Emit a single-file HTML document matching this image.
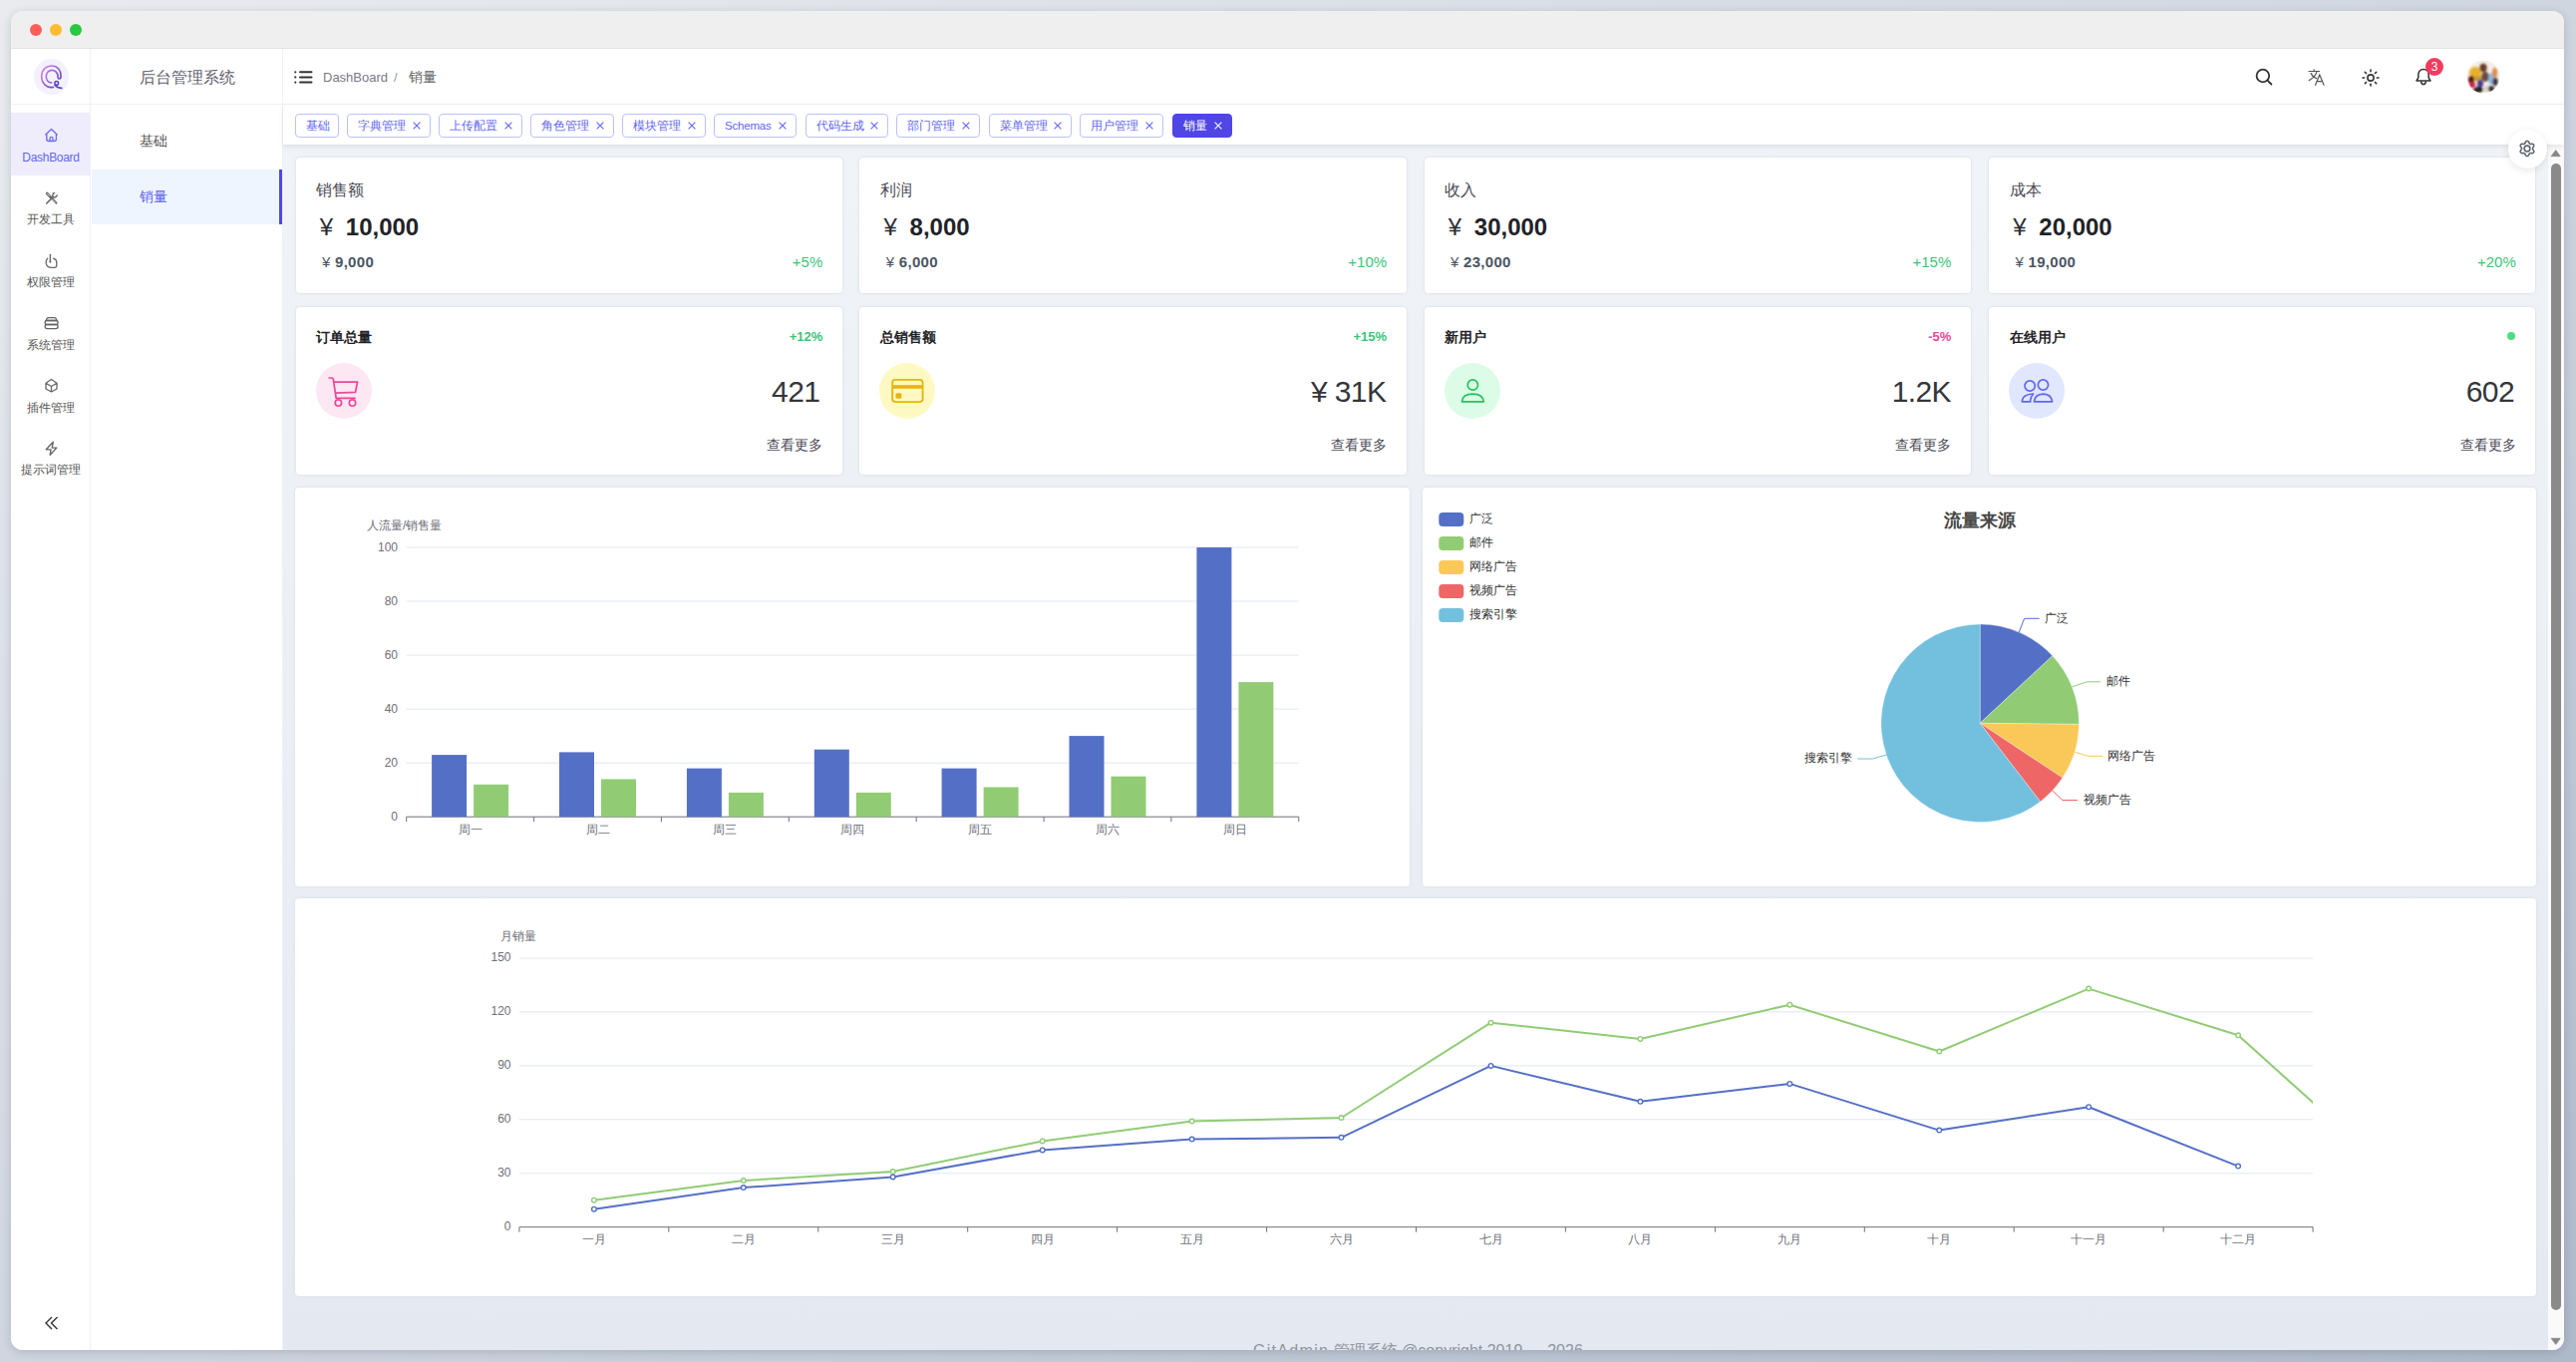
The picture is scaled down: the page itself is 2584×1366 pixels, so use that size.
<!DOCTYPE html><html><head><meta charset="utf-8"><title>Dashboard</title><style>
*{box-sizing:border-box;margin:0;padding:0}
html,body{width:2584px;height:1366px;overflow:hidden}
body{font-family:"Liberation Sans",sans-serif;position:relative;
 background:linear-gradient(to bottom right,#e9ebef 0%,#d0d6e0 50%,#aeb9ca 100%);}
.abs{position:absolute}
.win{position:absolute;left:11px;top:11px;width:2561px;height:1343px;border-radius:12px;overflow:hidden;background:#fff;
 box-shadow:0 2px 10px rgba(30,40,60,.18)}
.tb{position:absolute;left:0;top:0;width:2561px;height:38px;background:#efefef;border-bottom:1px solid #e3e3e3}
.dot{position:absolute;top:13px;width:12px;height:12px;border-radius:50%}
.t{position:absolute;white-space:nowrap;line-height:1}
.card{position:absolute;background:#fff;border-radius:4px;box-shadow:0 0 0 1px rgba(225,229,236,.75),0 0 4px rgba(0,0,0,.05)}
.tag{position:absolute;height:24px;border:1px solid #bec1f9;border-radius:4px;color:#6366f1;font-size:12px;line-height:22px;padding-left:10px;white-space:nowrap}
.tag svg{position:absolute;top:7px}
.rail-i{position:absolute;left:0;width:79px;text-align:center;font-size:12px;color:#555}
</style></head><body>
<div class="win">
<div class="tb"><div class="dot" style="left:19px;background:#ff5f57"></div><div class="dot" style="left:39px;background:#febc2e"></div><div class="dot" style="left:59px;background:#28c840"></div></div>
<div class="abs" style="left:0;top:38px;width:80px;height:1305px;background:#fff;border-right:1px solid #eef0f4"></div>
<div class="abs" style="left:81px;top:38px;width:192px;height:1305px;background:#fff;border-right:1px solid #eef0f4"></div>
<div class="abs" style="left:0;top:93px;width:272px;height:1px;background:#eef0f4"></div>
<div class="abs" style="left:22.700000000000003px;top:48.300000000000004px;width:35.8px;height:35.8px;border-radius:50%;background:#f3f1fb"></div>
<svg class="abs" style="left:16px;top:41px" width="50" height="50" viewBox="0 0 1362 1362">
<defs><linearGradient id="lg" x1="0.1" y1="0.2" x2="0.9" y2="0.9"><stop offset="0" stop-color="#cf7fe6"/><stop offset="1" stop-color="#5a3cc8"/></linearGradient></defs>
<path d="M720 965 C540 1000 400 860 400 670 C400 500 520 380 680 380 C840 380 930 510 930 660 C930 720 905 735 880 735 C855 735 845 715 845 660 C845 570 770 500 680 500 C590 500 525 580 525 675 C525 770 590 840 670 845" fill="none" stroke="url(#lg)" stroke-width="44" stroke-linecap="round"/>
<circle cx="810" cy="855" r="50" fill="none" stroke="#5b3fcc" stroke-width="40"/>
<path d="M765 915 C825 985 880 995 950 990" fill="none" stroke="#5b3fcc" stroke-width="44" stroke-linecap="round"/>
</svg>
<div class="t" style="left:129px;top:59px;font-size:16px;color:#5f5f6e">后台管理系统</div>
<div class="abs" style="left:0;top:102px;width:79px;height:63px;background:#efedfb"></div>
<svg class="abs" style="left:30px;top:114px;color:#6f6cf0" width="20" height="20" viewBox="0 0 20 20"><path d="M4.8 10 L10.5 4.4 L16.2 10 M5.8 9.4 V14.6 C5.8 15.8 6.6 16.5 7.8 16.5 H13.4 C14.6 16.5 15.4 15.8 15.4 14.6 V9.4 M9 16.5 V14 C9 13 9.6 12.4 10.5 12.4 C11.4 12.4 12 13 12 14 V16.5" fill="none" stroke="currentColor" stroke-width="1.35" stroke-linejoin="round" stroke-linecap="round"/></svg>
<div class="t" style="left:0;width:80px;text-align:center;top:141px;font-size:12px;color:#6366f1;letter-spacing:-0.3px;">DashBoard</div>
<svg class="abs" style="left:30px;top:177px;color:#666" width="20" height="20" viewBox="0 0 20 20"><g fill="none" stroke="currentColor" stroke-linecap="round" stroke-linejoin="round"><path d="M6.2 6 L9.6 9.6" stroke-width="2.6"/><path d="M9.6 9.6 L15.3 15.6" stroke-width="2.2"/><path d="M5.7 16 L12.2 9.6" stroke-width="1.6"/><path d="M12.2 9.6 C11.3 8.2 11.8 6 13.6 5.4 M12.2 9.6 C13.6 10.4 15.6 9.8 16.2 8" stroke-width="1.4"/></g><g fill="#fff"><path d="M6.6 6.3 L8.6 8.4" stroke="#fff" stroke-width="0.8" stroke-linecap="round"/><path d="M11.5 12.1 L14.6 15.3" stroke="#fff" stroke-width="0.7" stroke-linecap="round"/></g></svg>
<div class="t" style="left:0;width:80px;text-align:center;top:203px;font-size:12px;color:#555;">开发工具</div>
<svg class="abs" style="left:30px;top:240px;color:#666" width="20" height="20" viewBox="0 0 20 20"><g fill="none" stroke="currentColor" stroke-width="1.3" stroke-linecap="round"><path d="M9.4 4.3 V11.2"/><path d="M6.6 8.2 C5.4 9.4 5 11 5.2 12.8 C5.5 15.4 7.4 17.2 10 17.3 H14 C15.1 17.3 15.8 16.6 15.8 15.5 V12 C15.8 10.3 14.6 9 12.6 8.2"/></g><circle cx="9.4" cy="11.6" r="1.1" fill="currentColor"/></svg>
<div class="t" style="left:0;width:80px;text-align:center;top:266px;font-size:12px;color:#555;">权限管理</div>
<svg class="abs" style="left:30px;top:302px;color:#666" width="20" height="20" viewBox="0 0 20 20"><g fill="none" stroke="currentColor" stroke-width="1.3" stroke-linejoin="round"><path d="M7.4 5.6 H13.8 C14.8 5.6 15.6 7 16 8.5 H5.2 C5.6 7 6.4 5.6 7.4 5.6 Z"/><rect x="4.1" y="8.5" width="13" height="4" rx="2"/><rect x="4.1" y="12.5" width="13" height="4.2" rx="2.1"/></g></svg>
<div class="t" style="left:0;width:80px;text-align:center;top:329px;font-size:12px;color:#555;">系统管理</div>
<svg class="abs" style="left:30px;top:365px;color:#666" width="20" height="20" viewBox="0 0 20 20"><path d="M10.5 4.5 L16 8.2 V14 L10.5 17 L5 14 V8.2 Z M5 8.2 L10.5 11.5 L16 8.2 M10.5 11.5 V17" fill="none" stroke="currentColor" stroke-width="1.3" stroke-linejoin="round"/></svg>
<div class="t" style="left:0;width:80px;text-align:center;top:392px;font-size:12px;color:#555;">插件管理</div>
<svg class="abs" style="left:30px;top:428px;color:#666" width="20" height="20" viewBox="0 0 20 20"><path d="M12.3 4.3 L5.3 11.8 H10 L9.2 17.3 L15.8 10.1 H11.2 Z" fill="none" stroke="currentColor" stroke-width="1.35" stroke-linejoin="round"/></svg>
<div class="t" style="left:0;width:80px;text-align:center;top:454px;font-size:12px;color:#555;">提示词管理</div>
<svg class="abs" style="left:33px;top:1308px" width="16" height="16" viewBox="0 0 16 16"><path d="M8 2 L2 8 L8 14 M13.5 2 L7.5 8 L13.5 14" fill="none" stroke="#333" stroke-width="1.4"/></svg>
<div class="t" style="left:129px;top:123px;font-size:14px;color:#555">基础</div>
<div class="abs" style="left:81px;top:159px;width:191px;height:55px;background:#eff5ff"></div>
<div class="abs" style="left:269px;top:159px;width:3px;height:55px;background:#4f46e5"></div>
<div class="t" style="left:129px;top:179px;font-size:14px;color:#6366f1">销量</div>
<div class="abs" style="left:273px;top:93px;width:2288px;height:1px;background:#eef0f4"></div>
<svg class="abs" style="left:284px;top:59px" width="20" height="15" viewBox="0 0 20 15"><g fill="#333"><circle cx="1.3" cy="2.3" r="1.1"/><circle cx="1.3" cy="7.4" r="1.1"/><circle cx="1.3" cy="12.6" r="1.1"/></g><g stroke="#333" stroke-width="2" stroke-linecap="round"><path d="M6 2.3 H17.5 M6 7.4 H17.5 M6 12.6 H17.5"/></g></svg>
<div class="t" style="left:313px;top:60px;font-size:13px;color:#7a7a86">DashBoard</div>
<div class="t" style="left:384px;top:60px;font-size:13px;color:#9a9aa6">/</div>
<div class="t" style="left:399px;top:59px;font-size:14px;color:#666">销量</div>
<svg class="abs" style="left:2251px;top:57px" width="18" height="18" viewBox="0 0 18 18"><circle cx="7.9" cy="8" r="6.3" fill="none" stroke="#333" stroke-width="1.8"/><path d="M12.5 12.6 L16.4 16.5" stroke="#333" stroke-width="1.9" stroke-linecap="round"/></svg>
<svg class="abs" style="left:2304px;top:58px" width="18" height="18" viewBox="0 0 18 18"><g fill="none" stroke="#555" stroke-width="1.2" stroke-linecap="round"><path d="M1 2.5 H11.6 M6.2 0.9 V2.5 M3.2 4.6 C4.4 7.5 6.4 9 8.6 9.6 M9 2.9 C7.8 6.5 5 9.8 1.2 11.6 M7.5 16.3 L11.8 6 L16.1 16.3 M9.1 12.6 H14.5"/></g></svg>
<svg class="abs" style="left:2358.2px;top:57.599999999999994px" width="18" height="18" viewBox="0 0 18 18"><circle cx="9" cy="9" r="3.1" fill="none" stroke="#333" stroke-width="1.6"/><path d="M9.00 2.70 L9.00 1.00" stroke="#333" stroke-width="1.6" stroke-linecap="round"/><path d="M13.45 4.55 L14.66 3.34" stroke="#333" stroke-width="1.6" stroke-linecap="round"/><path d="M15.30 9.00 L17.00 9.00" stroke="#333" stroke-width="1.6" stroke-linecap="round"/><path d="M13.45 13.45 L14.66 14.66" stroke="#333" stroke-width="1.6" stroke-linecap="round"/><path d="M9.00 15.30 L9.00 17.00" stroke="#333" stroke-width="1.6" stroke-linecap="round"/><path d="M4.55 13.45 L3.34 14.66" stroke="#333" stroke-width="1.6" stroke-linecap="round"/><path d="M2.70 9.00 L1.00 9.00" stroke="#333" stroke-width="1.6" stroke-linecap="round"/><path d="M4.55 4.55 L3.34 3.34" stroke="#333" stroke-width="1.6" stroke-linecap="round"/></svg>
<svg class="abs" style="left:2411px;top:57px" width="18" height="19" viewBox="0 0 18 19"><path d="M9 1.6 C5.6 1.6 3.8 4.2 3.8 7 V10 L2 12.9 H16 L14.2 10 V7 C14.2 4.2 12.4 1.6 9 1.6 Z" fill="none" stroke="#333" stroke-width="1.5" stroke-linejoin="round"/><path d="M6.6 13.2 C6.6 15.2 7.6 16.6 9 16.6 C10.4 16.6 11.4 15.2 11.4 13.2" fill="none" stroke="#333" stroke-width="1.5"/></svg>
<div class="abs" style="left:2422px;top:47px;width:18px;height:18px;border-radius:50%;background:#f23b5f;color:#fff;font-size:12px;line-height:18px;text-align:center">3</div>
<svg class="abs" style="left:2462.6px;top:49px" width="34" height="34" viewBox="0 0 34 34">
<defs><clipPath id="avc"><circle cx="17" cy="17" r="16.6"/></clipPath><filter id="avb" x="-20%" y="-20%" width="140%" height="140%"><feGaussianBlur stdDeviation="0.9"/></filter></defs>
<g clip-path="url(#avc)"><rect width="34" height="34" fill="#f4efe6"/>
<g filter="url(#avb)">
<ellipse cx="9" cy="13" rx="6" ry="6" fill="#e8b02a"/>
<ellipse cx="12" cy="19" rx="4" ry="3" fill="#c99a3a"/>
<ellipse cx="5" cy="20" rx="3" ry="4" fill="#5a1a14"/>
<ellipse cx="6" cy="25" rx="3" ry="3" fill="#d0203a"/>
<ellipse cx="17" cy="8" rx="3.6" ry="4.2" fill="#6a3a2a"/>
<ellipse cx="19" cy="17" rx="4" ry="5" fill="#6a4a45"/>
<ellipse cx="14" cy="24" rx="3" ry="4" fill="#4a3a90"/>
<ellipse cx="25" cy="19" rx="3" ry="6" fill="#8fb8d8"/>
<ellipse cx="28.5" cy="13" rx="2.5" ry="5" fill="#e08a4a"/>
<ellipse cx="29" cy="22" rx="2.5" ry="4" fill="#3a2a40"/>
<ellipse cx="12" cy="30" rx="5" ry="3" fill="#2a2226"/>
<ellipse cx="20" cy="29" rx="3" ry="3" fill="#d8d2c8"/>
<ellipse cx="25" cy="29" rx="3" ry="3" fill="#3a3030"/>
</g></g></svg>
<div class="abs" style="left:273px;top:94px;width:2288px;height:40px;background:#fff;box-shadow:0 2px 5px rgba(0,0,0,.09);z-index:2">
<div class="tag" style="left:12px;top:8.5px;width:44px;">基础</div>
<div class="tag" style="left:64px;top:8.5px;width:84px;">字典管理<svg style="right:9px" width="8" height="8" viewBox="0 0 8 8"><path d="M0.6 0.6 L7.4 7.4 M7.4 0.6 L0.6 7.4" stroke="#6366f1" stroke-width="1.1"/></svg></div>
<div class="tag" style="left:156px;top:8.5px;width:84px;">上传配置<svg style="right:9px" width="8" height="8" viewBox="0 0 8 8"><path d="M0.6 0.6 L7.4 7.4 M7.4 0.6 L0.6 7.4" stroke="#6366f1" stroke-width="1.1"/></svg></div>
<div class="tag" style="left:248px;top:8.5px;width:84px;">角色管理<svg style="right:9px" width="8" height="8" viewBox="0 0 8 8"><path d="M0.6 0.6 L7.4 7.4 M7.4 0.6 L0.6 7.4" stroke="#6366f1" stroke-width="1.1"/></svg></div>
<div class="tag" style="left:340px;top:8.5px;width:84px;">模块管理<svg style="right:9px" width="8" height="8" viewBox="0 0 8 8"><path d="M0.6 0.6 L7.4 7.4 M7.4 0.6 L0.6 7.4" stroke="#6366f1" stroke-width="1.1"/></svg></div>
<div class="tag" style="left:432px;top:8.5px;width:83px;font-size:11.5px;letter-spacing:-0.2px;">Schemas<svg style="right:9px" width="8" height="8" viewBox="0 0 8 8"><path d="M0.6 0.6 L7.4 7.4 M7.4 0.6 L0.6 7.4" stroke="#6366f1" stroke-width="1.1"/></svg></div>
<div class="tag" style="left:524px;top:8.5px;width:83px;">代码生成<svg style="right:9px" width="8" height="8" viewBox="0 0 8 8"><path d="M0.6 0.6 L7.4 7.4 M7.4 0.6 L0.6 7.4" stroke="#6366f1" stroke-width="1.1"/></svg></div>
<div class="tag" style="left:615px;top:8.5px;width:84px;">部门管理<svg style="right:9px" width="8" height="8" viewBox="0 0 8 8"><path d="M0.6 0.6 L7.4 7.4 M7.4 0.6 L0.6 7.4" stroke="#6366f1" stroke-width="1.1"/></svg></div>
<div class="tag" style="left:708px;top:8.5px;width:83px;">菜单管理<svg style="right:9px" width="8" height="8" viewBox="0 0 8 8"><path d="M0.6 0.6 L7.4 7.4 M7.4 0.6 L0.6 7.4" stroke="#6366f1" stroke-width="1.1"/></svg></div>
<div class="tag" style="left:799px;top:8.5px;width:84px;">用户管理<svg style="right:9px" width="8" height="8" viewBox="0 0 8 8"><path d="M0.6 0.6 L7.4 7.4 M7.4 0.6 L0.6 7.4" stroke="#6366f1" stroke-width="1.1"/></svg></div>
<div class="tag" style="left:892px;top:8.5px;width:60px;background:#4f46e5;border-color:#4f46e5;color:#fff;">销量<svg style="right:9px" width="8" height="8" viewBox="0 0 8 8"><path d="M0.6 0.6 L7.4 7.4 M7.4 0.6 L0.6 7.4" stroke="#fff" stroke-width="1.1"/></svg></div>
</div>
<div class="abs" style="left:273px;top:134px;width:2272px;height:1209px;background:linear-gradient(180deg,#f0f3f7 0%,#eaeef4 60%,#e4e8f0 100%)"></div>
<div class="abs" style="left:2545px;top:134px;width:16px;height:1209px;background:#fafafa"></div>
<svg class="abs" style="left:2545px;top:134px" width="16" height="20" viewBox="0 0 16 20"><path d="M3.2 11.7 L7.7 5.6 L12.2 11.7 Z" fill="#888" stroke="#888" stroke-width="0.8" stroke-linejoin="round"/></svg>
<div class="abs" style="left:2548px;top:152.5px;width:9.5px;height:1150.5px;border-radius:5px;background:#8a8a8a"></div>
<svg class="abs" style="left:2545px;top:1323px" width="16" height="20" viewBox="0 0 16 20"><path d="M3.2 8.3 L7.7 14.4 L12.2 8.3 Z" fill="#888" stroke="#888" stroke-width="0.8" stroke-linejoin="round"/></svg>
<div class="card" style="left:285.5px;top:147.3px;width:548.3px;height:135.89999999999998px"></div>
<div class="t" style="left:306.0px;top:171.6px;font-size:16px;color:#4b4b55;font-weight:400;">销售额</div>
<div class="t" style="left:309.7px;top:205.2px;font-size:24px;color:#2a2d33;font-weight:400;">¥</div>
<div class="t" style="left:335.8px;top:204.8px;font-size:24px;color:#1f2328;font-weight:700;">10,000</div>
<div class="t" style="left:312.0px;top:244.3px;font-size:15px;color:#4b5563;font-weight:400;">¥</div>
<div class="t" style="left:325.0px;top:244.10000000000002px;font-size:15px;color:#4b5563;font-weight:600;letter-spacing:0.3px;">9,000</div>
<div class="t" style="right:1746.7px;top:244.10000000000002px;font-size:15px;color:#3cc479;font-weight:400;text-align:right;">+5%</div>
<div class="card" style="left:851.3px;top:147.3px;width:548.3px;height:135.89999999999998px"></div>
<div class="t" style="left:871.8px;top:171.6px;font-size:16px;color:#4b4b55;font-weight:400;">利润</div>
<div class="t" style="left:875.5px;top:205.2px;font-size:24px;color:#2a2d33;font-weight:400;">¥</div>
<div class="t" style="left:901.5999999999999px;top:204.8px;font-size:24px;color:#1f2328;font-weight:700;">8,000</div>
<div class="t" style="left:877.8px;top:244.3px;font-size:15px;color:#4b5563;font-weight:400;">¥</div>
<div class="t" style="left:890.8px;top:244.10000000000002px;font-size:15px;color:#4b5563;font-weight:600;letter-spacing:0.3px;">6,000</div>
<div class="t" style="right:1180.9px;top:244.10000000000002px;font-size:15px;color:#3cc479;font-weight:400;text-align:right;">+10%</div>
<div class="card" style="left:1417.5px;top:147.3px;width:548.3px;height:135.89999999999998px"></div>
<div class="t" style="left:1438.0px;top:171.6px;font-size:16px;color:#4b4b55;font-weight:400;">收入</div>
<div class="t" style="left:1441.7px;top:205.2px;font-size:24px;color:#2a2d33;font-weight:400;">¥</div>
<div class="t" style="left:1467.8px;top:204.8px;font-size:24px;color:#1f2328;font-weight:700;">30,000</div>
<div class="t" style="left:1444.0px;top:244.3px;font-size:15px;color:#4b5563;font-weight:400;">¥</div>
<div class="t" style="left:1457.0px;top:244.10000000000002px;font-size:15px;color:#4b5563;font-weight:600;letter-spacing:0.3px;">23,000</div>
<div class="t" style="right:614.7px;top:244.10000000000002px;font-size:15px;color:#3cc479;font-weight:400;text-align:right;">+15%</div>
<div class="card" style="left:1984px;top:147.3px;width:548.3000000000002px;height:135.89999999999998px"></div>
<div class="t" style="left:2004.5px;top:171.6px;font-size:16px;color:#4b4b55;font-weight:400;">成本</div>
<div class="t" style="left:2008.2px;top:205.2px;font-size:24px;color:#2a2d33;font-weight:400;">¥</div>
<div class="t" style="left:2034.3px;top:204.8px;font-size:24px;color:#1f2328;font-weight:700;">20,000</div>
<div class="t" style="left:2010.5px;top:244.3px;font-size:15px;color:#4b5563;font-weight:400;">¥</div>
<div class="t" style="left:2023.5px;top:244.10000000000002px;font-size:15px;color:#4b5563;font-weight:600;letter-spacing:0.3px;">19,000</div>
<div class="t" style="right:48.19999999999982px;top:244.10000000000002px;font-size:15px;color:#3cc479;font-weight:400;text-align:right;">+20%</div>
<div class="card" style="left:285.5px;top:296.8px;width:548.3px;height:168.2px"></div>
<div class="t" style="left:306.0px;top:320.0px;font-size:14px;color:#1f2328;font-weight:700;">订单总量</div>
<div class="t" style="right:1746.7px;top:320.0px;font-size:13px;color:#3cc479;font-weight:600;text-align:right;">+12%</div>
<svg class="abs" style="left:305.5px;top:353px" width="56" height="56" viewBox="0 0 1362 1362"><circle cx="681" cy="681" r="681" fill="#fce7f3"/><path d="M320 365 H385 C405 365 418 378 422 400 L490 860 H950" fill="none" stroke="#ec4899" stroke-width="42" stroke-linecap="round" stroke-linejoin="round"/><path d="M432 465 H1010 L962 712 L488 732" fill="none" stroke="#ec4899" stroke-width="42" stroke-linejoin="round"/><circle cx="545" cy="975" r="78" fill="none" stroke="#ec4899" stroke-width="40"/><circle cx="888" cy="975" r="78" fill="none" stroke="#ec4899" stroke-width="40"/></svg>
<div class="t" style="right:1749.7px;top:367.0px;font-size:30px;color:#35353b;font-weight:400;text-align:right;letter-spacing:-0.6px;">421</div>
<div class="t" style="right:1746.7px;top:428.0px;font-size:14px;color:#4b4b55;font-weight:400;text-align:right;">查看更多</div>
<div class="card" style="left:851.3px;top:296.8px;width:548.3px;height:168.2px"></div>
<div class="t" style="left:871.8px;top:320.0px;font-size:14px;color:#1f2328;font-weight:700;">总销售额</div>
<div class="t" style="right:1180.9px;top:320.0px;font-size:13px;color:#3cc479;font-weight:600;text-align:right;">+15%</div>
<svg class="abs" style="left:871.3px;top:353px" width="56" height="56" viewBox="0 0 1362 1362"><circle cx="681" cy="681" r="681" fill="#fef9c3"/><rect x="320" y="412" width="740" height="538" rx="72" fill="none" stroke="#eab308" stroke-width="44"/><rect x="320" y="540" width="740" height="86" fill="#eab308"/><rect x="400" y="735" width="145" height="135" rx="40" fill="#eab308"/></svg>
<div class="t" style="right:1181.7px;top:367.0px;font-size:30px;color:#35353b;font-weight:400;text-align:right;letter-spacing:-0.6px;">¥ 31K</div>
<div class="t" style="right:1180.9px;top:428.0px;font-size:14px;color:#4b4b55;font-weight:400;text-align:right;">查看更多</div>
<div class="card" style="left:1417.5px;top:296.8px;width:548.3px;height:168.2px"></div>
<div class="t" style="left:1438.0px;top:320.0px;font-size:14px;color:#1f2328;font-weight:700;">新用户</div>
<div class="t" style="right:614.7px;top:320.0px;font-size:13px;color:#ec4899;font-weight:600;text-align:right;">-5%</div>
<svg class="abs" style="left:1437.5px;top:353px" width="56" height="56" viewBox="0 0 1362 1362"><circle cx="681" cy="681" r="681" fill="#dcfce7"/><circle cx="690" cy="535" r="125" fill="none" stroke="#22c55e" stroke-width="42"/><path d="M425 945 C432 820 540 755 690 755 C840 755 948 820 955 945 Z" fill="none" stroke="#22c55e" stroke-width="42" stroke-linejoin="round"/></svg>
<div class="t" style="right:615.0px;top:367.0px;font-size:30px;color:#35353b;font-weight:400;text-align:right;letter-spacing:-0.6px;">1.2K</div>
<div class="t" style="right:614.7px;top:428.0px;font-size:14px;color:#4b4b55;font-weight:400;text-align:right;">查看更多</div>
<div class="card" style="left:1984px;top:296.8px;width:548.3000000000002px;height:168.2px"></div>
<div class="t" style="left:2004.5px;top:320.0px;font-size:14px;color:#1f2328;font-weight:700;">在线用户</div>
<div class="abs" style="left:2503.8px;top:321.5px;width:8px;height:8px;border-radius:50%;background:#4ade80"></div>
<svg class="abs" style="left:2004px;top:353px" width="56" height="56" viewBox="0 0 1362 1362"><circle cx="681" cy="681" r="681" fill="#e0e7ff"/><circle cx="515" cy="560" r="125" fill="none" stroke="#6366f1" stroke-width="42"/><circle cx="838" cy="535" r="125" fill="none" stroke="#6366f1" stroke-width="42"/><path d="M322 945 C332 830 420 762 600 755 C538 822 518 882 530 945 Z" fill="none" stroke="#6366f1" stroke-width="40" stroke-linejoin="round"/><path d="M618 945 C628 830 712 760 840 755 C970 760 1050 830 1060 945 Z" fill="none" stroke="#6366f1" stroke-width="42" stroke-linejoin="round"/></svg>
<div class="t" style="right:50.0px;top:367.0px;font-size:30px;color:#35353b;font-weight:400;text-align:right;letter-spacing:-0.6px;">602</div>
<div class="t" style="right:48.19999999999982px;top:428.0px;font-size:14px;color:#4b4b55;font-weight:400;text-align:right;">查看更多</div>
<div class="card" style="left:285px;top:478.3px;width:1118.4px;height:399.3px"></div>
<svg class="abs" style="left:285px;top:478px" width="1119" height="400" viewBox="296 489 1119 400" font-family="Liberation Sans",sans-serif><text x="399" y="822.8" text-anchor="end" font-size="12" fill="#6e7079">0</text><line x1="407.7" y1="765.2" x2="1302.8" y2="765.2" stroke="#e0e6f1" stroke-width="1"/><text x="399" y="768.8" text-anchor="end" font-size="12" fill="#6e7079">20</text><line x1="407.7" y1="711.1" x2="1302.8" y2="711.1" stroke="#e0e6f1" stroke-width="1"/><text x="399" y="714.7" text-anchor="end" font-size="12" fill="#6e7079">40</text><line x1="407.7" y1="657.1" x2="1302.8" y2="657.1" stroke="#e0e6f1" stroke-width="1"/><text x="399" y="660.7" text-anchor="end" font-size="12" fill="#6e7079">60</text><line x1="407.7" y1="603.0" x2="1302.8" y2="603.0" stroke="#e0e6f1" stroke-width="1"/><text x="399" y="606.6" text-anchor="end" font-size="12" fill="#6e7079">80</text><line x1="407.7" y1="549.0" x2="1302.8" y2="549.0" stroke="#e0e6f1" stroke-width="1"/><text x="399" y="552.6" text-anchor="end" font-size="12" fill="#6e7079">100</text><line x1="407.7" y1="819.2" x2="1302.8" y2="819.2" stroke="#6e7079" stroke-width="1"/><line x1="407.7" y1="819.2" x2="407.7" y2="824.2" stroke="#6e7079" stroke-width="1"/><line x1="535.6" y1="819.2" x2="535.6" y2="824.2" stroke="#6e7079" stroke-width="1"/><line x1="663.4" y1="819.2" x2="663.4" y2="824.2" stroke="#6e7079" stroke-width="1"/><line x1="791.3" y1="819.2" x2="791.3" y2="824.2" stroke="#6e7079" stroke-width="1"/><line x1="919.2" y1="819.2" x2="919.2" y2="824.2" stroke="#6e7079" stroke-width="1"/><line x1="1047.1" y1="819.2" x2="1047.1" y2="824.2" stroke="#6e7079" stroke-width="1"/><line x1="1174.9" y1="819.2" x2="1174.9" y2="824.2" stroke="#6e7079" stroke-width="1"/><line x1="1302.8" y1="819.2" x2="1302.8" y2="824.2" stroke="#6e7079" stroke-width="1"/><rect x="433.1" y="757.1" width="35" height="62.1" fill="#5470c6"/><rect x="475.1" y="786.8" width="35" height="32.4" fill="#91cc75"/><text x="471.6" y="836.0" text-anchor="middle" font-size="12" fill="#6e7079">周一</text><rect x="561.0" y="754.4" width="35" height="64.8" fill="#5470c6"/><rect x="603.0" y="781.4" width="35" height="37.8" fill="#91cc75"/><text x="599.5" y="836.0" text-anchor="middle" font-size="12" fill="#6e7079">周二</text><rect x="688.9" y="770.6" width="35" height="48.6" fill="#5470c6"/><rect x="730.9" y="794.9" width="35" height="24.3" fill="#91cc75"/><text x="727.4" y="836.0" text-anchor="middle" font-size="12" fill="#6e7079">周三</text><rect x="816.8" y="751.7" width="35" height="67.6" fill="#5470c6"/><rect x="858.8" y="794.9" width="35" height="24.3" fill="#91cc75"/><text x="855.2" y="836.0" text-anchor="middle" font-size="12" fill="#6e7079">周四</text><rect x="944.6" y="770.6" width="35" height="48.6" fill="#5470c6"/><rect x="986.6" y="789.5" width="35" height="29.7" fill="#91cc75"/><text x="983.1" y="836.0" text-anchor="middle" font-size="12" fill="#6e7079">周五</text><rect x="1072.5" y="738.1" width="35" height="81.1" fill="#5470c6"/><rect x="1114.5" y="778.7" width="35" height="40.5" fill="#91cc75"/><text x="1111.0" y="836.0" text-anchor="middle" font-size="12" fill="#6e7079">周六</text><rect x="1200.4" y="549.0" width="35" height="270.2" fill="#5470c6"/><rect x="1242.4" y="684.1" width="35" height="135.1" fill="#91cc75"/><text x="1238.9" y="836.0" text-anchor="middle" font-size="12" fill="#6e7079">周日</text><text x="368" y="531" font-size="12" fill="#6e7079">人流量/销售量</text></svg>
<div class="card" style="left:1415.8px;top:478.3px;width:1117.0000000000002px;height:399.3px"></div>
<svg class="abs" style="left:1416px;top:478px" width="1117" height="400" viewBox="1427 489 1117 400" font-family="Liberation Sans",sans-serif><rect x="1443.3" y="513.9" width="25" height="14" rx="4" fill="#5470c6"/><text x="1473.5" y="524.2" font-size="12" fill="#333">广泛</text><rect x="1443.3" y="537.9" width="25" height="14" rx="4" fill="#91cc75"/><text x="1473.5" y="548.2" font-size="12" fill="#333">邮件</text><rect x="1443.3" y="561.9" width="25" height="14" rx="4" fill="#fac858"/><text x="1473.5" y="572.2" font-size="12" fill="#333">网络广告</text><rect x="1443.3" y="585.9" width="25" height="14" rx="4" fill="#ee6666"/><text x="1473.5" y="596.2" font-size="12" fill="#333">视频广告</text><rect x="1443.3" y="609.9" width="25" height="14" rx="4" fill="#73c0de"/><text x="1473.5" y="620.2" font-size="12" fill="#333">搜索引擎</text><text x="1985.7" y="528" text-anchor="middle" font-size="18" font-weight="700" fill="#464646">流量来源</text><path d="M1986.2 725.3 L1986.20 626.10 A99.2 99.2 0 0 1 2058.84 657.74 Z" fill="#5470c6" stroke="#fff" stroke-width="0.3" stroke-linejoin="round"/><path d="M1986.2 725.3 L2058.84 657.74 A99.2 99.2 0 0 1 2085.39 726.39 Z" fill="#91cc75" stroke="#fff" stroke-width="0.3" stroke-linejoin="round"/><path d="M1986.2 725.3 L2085.39 726.39 A99.2 99.2 0 0 1 2068.91 780.07 Z" fill="#fac858" stroke="#fff" stroke-width="0.3" stroke-linejoin="round"/><path d="M1986.2 725.3 L2068.91 780.07 A99.2 99.2 0 0 1 2046.61 803.98 Z" fill="#ee6666" stroke="#fff" stroke-width="0.3" stroke-linejoin="round"/><path d="M1986.2 725.3 L2046.61 803.98 A99.2 99.2 0 1 1 1986.20 626.10 Z" fill="#73c0de" stroke="#fff" stroke-width="0.3" stroke-linejoin="round"/><path d="M2025.3 634 L2030.6 620.3 L2045.7 620.3" fill="none" stroke="#5470c6" stroke-width="1"/><text x="2051" y="623.5999999999999" text-anchor="start" font-size="12" fill="#333">广泛</text><path d="M2078.7 688.8 L2093.2 683.8 L2107.2 683.8" fill="none" stroke="#91cc75" stroke-width="1"/><text x="2112.5" y="687.0999999999999" text-anchor="start" font-size="12" fill="#333">邮件</text><path d="M2081.4 754.3 L2094.6 758.3 L2109 758.3" fill="none" stroke="#fac858" stroke-width="1"/><text x="2114" y="761.5999999999999" text-anchor="start" font-size="12" fill="#333">网络广告</text><path d="M2058.4 792.7 L2069 802.5 L2084 802.5" fill="none" stroke="#ee6666" stroke-width="1"/><text x="2089.5" y="805.8" text-anchor="start" font-size="12" fill="#333">视频广告</text><path d="M1892.3 757 L1878.3 761 L1863.3 761" fill="none" stroke="#73c0de" stroke-width="1"/><text x="1858" y="764.3" text-anchor="end" font-size="12" fill="#333">搜索引擎</text></svg>
<div class="card" style="left:285px;top:889.8px;width:2247.8px;height:399.20000000000005px"></div>
<svg class="abs" style="left:285px;top:889px" width="2248" height="401" viewBox="296 900 2248 401" font-family="Liberation Sans",sans-serif><text x="512.5" y="1233.7" text-anchor="end" font-size="12" fill="#6e7079">0</text><line x1="520.9" y1="1176.8" x2="2320.1" y2="1176.8" stroke="#e0e6f1" stroke-width="1"/><text x="512.5" y="1179.8" text-anchor="end" font-size="12" fill="#6e7079">30</text><line x1="520.9" y1="1122.8" x2="2320.1" y2="1122.8" stroke="#e0e6f1" stroke-width="1"/><text x="512.5" y="1125.8" text-anchor="end" font-size="12" fill="#6e7079">60</text><line x1="520.9" y1="1068.9" x2="2320.1" y2="1068.9" stroke="#e0e6f1" stroke-width="1"/><text x="512.5" y="1071.9" text-anchor="end" font-size="12" fill="#6e7079">90</text><line x1="520.9" y1="1014.9" x2="2320.1" y2="1014.9" stroke="#e0e6f1" stroke-width="1"/><text x="512.5" y="1017.9" text-anchor="end" font-size="12" fill="#6e7079">120</text><line x1="520.9" y1="961.0" x2="2320.1" y2="961.0" stroke="#e0e6f1" stroke-width="1"/><text x="512.5" y="964.0" text-anchor="end" font-size="12" fill="#6e7079">150</text><line x1="520.9" y1="1230.7" x2="2320.1" y2="1230.7" stroke="#6e7079" stroke-width="1"/><line x1="520.9" y1="1230.7" x2="520.9" y2="1235.7" stroke="#6e7079" stroke-width="1"/><line x1="670.8" y1="1230.7" x2="670.8" y2="1235.7" stroke="#6e7079" stroke-width="1"/><line x1="820.8" y1="1230.7" x2="820.8" y2="1235.7" stroke="#6e7079" stroke-width="1"/><line x1="970.7" y1="1230.7" x2="970.7" y2="1235.7" stroke="#6e7079" stroke-width="1"/><line x1="1120.6" y1="1230.7" x2="1120.6" y2="1235.7" stroke="#6e7079" stroke-width="1"/><line x1="1270.6" y1="1230.7" x2="1270.6" y2="1235.7" stroke="#6e7079" stroke-width="1"/><line x1="1420.5" y1="1230.7" x2="1420.5" y2="1235.7" stroke="#6e7079" stroke-width="1"/><line x1="1570.4" y1="1230.7" x2="1570.4" y2="1235.7" stroke="#6e7079" stroke-width="1"/><line x1="1720.4" y1="1230.7" x2="1720.4" y2="1235.7" stroke="#6e7079" stroke-width="1"/><line x1="1870.3" y1="1230.7" x2="1870.3" y2="1235.7" stroke="#6e7079" stroke-width="1"/><line x1="2020.2" y1="1230.7" x2="2020.2" y2="1235.7" stroke="#6e7079" stroke-width="1"/><line x1="2170.2" y1="1230.7" x2="2170.2" y2="1235.7" stroke="#6e7079" stroke-width="1"/><line x1="2320.1" y1="1230.7" x2="2320.1" y2="1235.7" stroke="#6e7079" stroke-width="1"/><text x="595.9" y="1246.6" text-anchor="middle" font-size="12" fill="#6e7079">一月</text><text x="745.8" y="1246.6" text-anchor="middle" font-size="12" fill="#6e7079">二月</text><text x="895.7" y="1246.6" text-anchor="middle" font-size="12" fill="#6e7079">三月</text><text x="1045.7" y="1246.6" text-anchor="middle" font-size="12" fill="#6e7079">四月</text><text x="1195.6" y="1246.6" text-anchor="middle" font-size="12" fill="#6e7079">五月</text><text x="1345.5" y="1246.6" text-anchor="middle" font-size="12" fill="#6e7079">六月</text><text x="1495.5" y="1246.6" text-anchor="middle" font-size="12" fill="#6e7079">七月</text><text x="1645.4" y="1246.6" text-anchor="middle" font-size="12" fill="#6e7079">八月</text><text x="1795.3" y="1246.6" text-anchor="middle" font-size="12" fill="#6e7079">九月</text><text x="1945.3" y="1246.6" text-anchor="middle" font-size="12" fill="#6e7079">十月</text><text x="2095.2" y="1246.6" text-anchor="middle" font-size="12" fill="#6e7079">十一月</text><text x="2245.1" y="1246.6" text-anchor="middle" font-size="12" fill="#6e7079">十二月</text><text x="502.4" y="942.5" font-size="12" fill="#6e7079">月销量</text><defs><clipPath id="gc"><rect x="520.9" y="900" width="1799.1999999999998" height="400"/></clipPath></defs><path d="M595.9 1203.7 L745.8 1184.0 L895.7 1175.0 L1045.7 1144.4 L1195.6 1124.6 L1345.5 1121.0 L1495.5 1025.7 L1645.4 1041.9 L1795.3 1007.7 L1945.3 1054.5 L2095.2 991.6 L2245.1 1038.3 L2395.1 1173.2" fill="none" stroke="#91cc75" stroke-width="2" stroke-linejoin="round" clip-path="url(#gc)"/><circle cx="595.9" cy="1203.7" r="2.3" fill="#fff" stroke="#91cc75" stroke-width="1.4"/><circle cx="745.8" cy="1184.0" r="2.3" fill="#fff" stroke="#91cc75" stroke-width="1.4"/><circle cx="895.7" cy="1175.0" r="2.3" fill="#fff" stroke="#91cc75" stroke-width="1.4"/><circle cx="1045.7" cy="1144.4" r="2.3" fill="#fff" stroke="#91cc75" stroke-width="1.4"/><circle cx="1195.6" cy="1124.6" r="2.3" fill="#fff" stroke="#91cc75" stroke-width="1.4"/><circle cx="1345.5" cy="1121.0" r="2.3" fill="#fff" stroke="#91cc75" stroke-width="1.4"/><circle cx="1495.5" cy="1025.7" r="2.3" fill="#fff" stroke="#91cc75" stroke-width="1.4"/><circle cx="1645.4" cy="1041.9" r="2.3" fill="#fff" stroke="#91cc75" stroke-width="1.4"/><circle cx="1795.3" cy="1007.7" r="2.3" fill="#fff" stroke="#91cc75" stroke-width="1.4"/><circle cx="1945.3" cy="1054.5" r="2.3" fill="#fff" stroke="#91cc75" stroke-width="1.4"/><circle cx="2095.2" cy="991.6" r="2.3" fill="#fff" stroke="#91cc75" stroke-width="1.4"/><circle cx="2245.1" cy="1038.3" r="2.3" fill="#fff" stroke="#91cc75" stroke-width="1.4"/><path d="M595.9 1212.7 L745.8 1191.1 L895.7 1180.4 L1045.7 1153.4 L1195.6 1142.6 L1345.5 1140.8 L1495.5 1068.9 L1645.4 1104.8 L1795.3 1086.9 L1945.3 1133.6 L2095.2 1110.2 L2245.1 1169.6" fill="none" stroke="#5470c6" stroke-width="2" stroke-linejoin="round" clip-path="url(#gc)"/><circle cx="595.9" cy="1212.7" r="2.3" fill="#fff" stroke="#5470c6" stroke-width="1.4"/><circle cx="745.8" cy="1191.1" r="2.3" fill="#fff" stroke="#5470c6" stroke-width="1.4"/><circle cx="895.7" cy="1180.4" r="2.3" fill="#fff" stroke="#5470c6" stroke-width="1.4"/><circle cx="1045.7" cy="1153.4" r="2.3" fill="#fff" stroke="#5470c6" stroke-width="1.4"/><circle cx="1195.6" cy="1142.6" r="2.3" fill="#fff" stroke="#5470c6" stroke-width="1.4"/><circle cx="1345.5" cy="1140.8" r="2.3" fill="#fff" stroke="#5470c6" stroke-width="1.4"/><circle cx="1495.5" cy="1068.9" r="2.3" fill="#fff" stroke="#5470c6" stroke-width="1.4"/><circle cx="1645.4" cy="1104.8" r="2.3" fill="#fff" stroke="#5470c6" stroke-width="1.4"/><circle cx="1795.3" cy="1086.9" r="2.3" fill="#fff" stroke="#5470c6" stroke-width="1.4"/><circle cx="1945.3" cy="1133.6" r="2.3" fill="#fff" stroke="#5470c6" stroke-width="1.4"/><circle cx="2095.2" cy="1110.2" r="2.3" fill="#fff" stroke="#5470c6" stroke-width="1.4"/><circle cx="2245.1" cy="1169.6" r="2.3" fill="#fff" stroke="#5470c6" stroke-width="1.4"/></svg>
<div class="t" style="left:1246px;top:1336px;font-size:16px;color:#8f949e"><span style="letter-spacing:1.3px">GitAdmin</span> 管理系统 @copyright 2019 — 2026</div>
<div class="abs" style="left:2504.5px;top:118.5px;width:39px;height:39px;border-radius:50%;background:#fff;box-shadow:0 2px 8px rgba(0,0,0,.10);z-index:3"></div>
<svg class="abs" style="left:2512.2px;top:126.30000000000001px;z-index:4" width="24" height="24" viewBox="0 0 24 24"><path d="M12.00 4.40 L12.40 4.45 L12.78 4.60 L13.13 4.83 L13.45 5.17 L13.70 5.67 L13.89 6.18 L14.09 6.54 L14.30 6.83 L14.51 7.06 L14.75 7.24 L15.02 7.35 L15.32 7.43 L15.68 7.46 L16.09 7.46 L16.63 7.37 L17.19 7.33 L17.64 7.43 L18.02 7.62 L18.34 7.88 L18.58 8.20 L18.74 8.57 L18.80 8.97 L18.77 9.40 L18.64 9.84 L18.33 10.30 L17.98 10.73 L17.77 11.09 L17.62 11.41 L17.53 11.71 L17.50 12.00 L17.53 12.29 L17.62 12.59 L17.77 12.91 L17.98 13.27 L18.33 13.70 L18.64 14.16 L18.77 14.60 L18.80 15.03 L18.74 15.43 L18.58 15.80 L18.34 16.12 L18.02 16.38 L17.64 16.57 L17.19 16.67 L16.63 16.63 L16.09 16.54 L15.68 16.54 L15.32 16.57 L15.02 16.65 L14.75 16.76 L14.51 16.94 L14.30 17.17 L14.09 17.46 L13.89 17.82 L13.70 18.33 L13.45 18.83 L13.13 19.17 L12.78 19.40 L12.40 19.55 L12.00 19.60 L11.60 19.55 L11.22 19.40 L10.87 19.17 L10.55 18.83 L10.30 18.33 L10.11 17.82 L9.91 17.46 L9.70 17.17 L9.49 16.94 L9.25 16.76 L8.98 16.65 L8.68 16.57 L8.32 16.54 L7.91 16.54 L7.37 16.63 L6.81 16.67 L6.36 16.57 L5.98 16.38 L5.66 16.12 L5.42 15.80 L5.26 15.43 L5.20 15.03 L5.23 14.60 L5.36 14.16 L5.67 13.70 L6.02 13.27 L6.23 12.91 L6.38 12.59 L6.47 12.29 L6.50 12.00 L6.47 11.71 L6.38 11.41 L6.23 11.09 L6.02 10.73 L5.67 10.30 L5.36 9.84 L5.23 9.40 L5.20 8.97 L5.26 8.57 L5.42 8.20 L5.66 7.88 L5.98 7.62 L6.36 7.43 L6.81 7.33 L7.37 7.37 L7.91 7.46 L8.32 7.46 L8.68 7.43 L8.98 7.35 L9.25 7.24 L9.49 7.06 L9.70 6.83 L9.91 6.54 L10.11 6.18 L10.30 5.67 L10.55 5.17 L10.87 4.83 L11.22 4.60 L11.60 4.45 L12.00 4.40 Z" fill="none" stroke="#5b6472" stroke-width="1.55" stroke-linejoin="round"/><circle cx="12" cy="12" r="2.9" fill="none" stroke="#5b6472" stroke-width="1.55"/></svg>
</div>
</body></html>
